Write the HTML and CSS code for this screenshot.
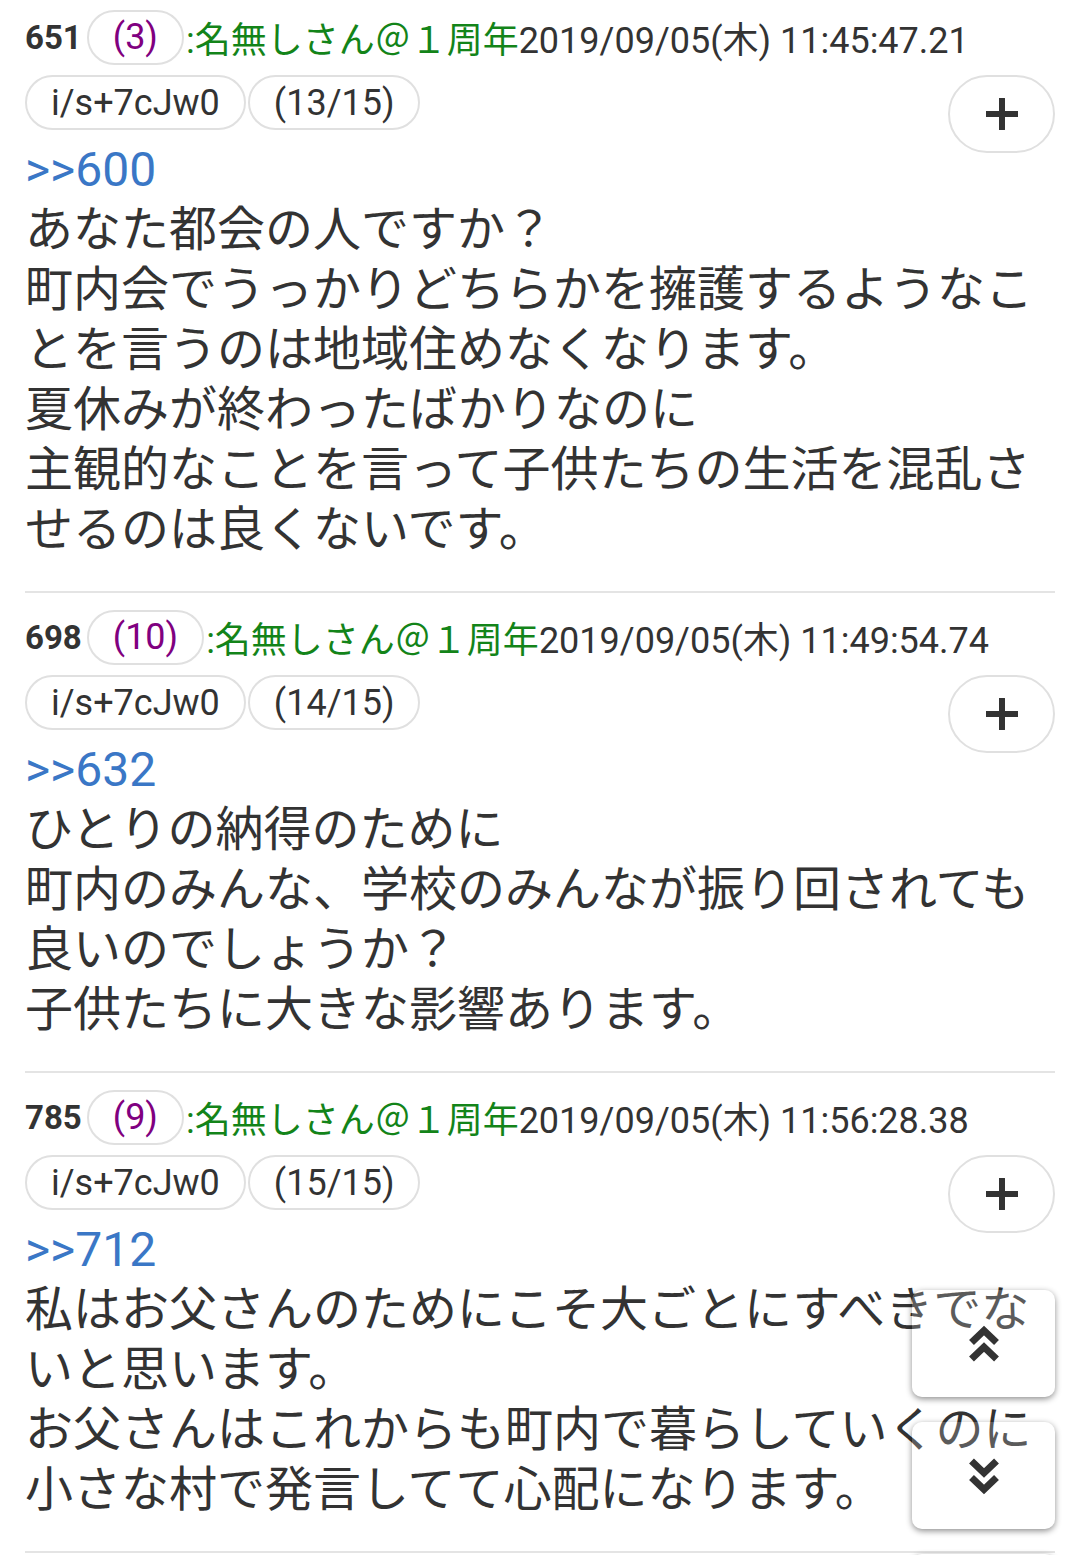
FILE: index.html
```html
<!DOCTYPE html>
<html lang="ja">
<head>
    <meta charset="UTF-8">
    <meta name="viewport" content="width=device-width, initial-scale=1.0">
    <title>スレッド</title>
    <link rel="stylesheet" href="styles.css">
</head>
<body>
    <div class="thread">
        <div class="post">
            <div class="head">
                <span class="num">651</span>
                <span class="pill refs">(3)</span>
                <span class="name">:名無しさん＠１周年</span>
                <span class="date">2019/09/05(木) 11:45:47.21</span>
            </div>
            <div class="tags">
                <span class="pill">i/s+7cJw0</span>
                <span class="pill">(13/15)</span>
                <button class="plus"><svg width="32" height="32" viewBox="0 0 32 32"><path d="M16 1v30M1 16h30" stroke="#333" stroke-width="6" stroke-linecap="round"/></svg></button>
            </div>
            <div class="body">
                <span class="anchor">&gt;&gt;600</span><br>
                あなた都会の人ですか？<br>
                町内会でうっかりどちらかを擁護するようなことを言うのは地域住めなくなります。<br>
                夏休みが終わったばかりなのに<br>
                主観的なことを言って子供たちの生活を混乱させるのは良くないです。
            </div>
        </div>

        <div class="post">
            <div class="head">
                <span class="num">698</span>
                <span class="pill refs">(10)</span>
                <span class="name">:名無しさん＠１周年</span>
                <span class="date">2019/09/05(木) 11:49:54.74</span>
            </div>
            <div class="tags">
                <span class="pill">i/s+7cJw0</span>
                <span class="pill">(14/15)</span>
                <button class="plus"><svg width="32" height="32" viewBox="0 0 32 32"><path d="M16 1v30M1 16h30" stroke="#333" stroke-width="6" stroke-linecap="round"/></svg></button>
            </div>
            <div class="body">
                <span class="anchor">&gt;&gt;632</span><br>
                ひとりの納得のために<br>
                町内のみんな、学校のみんなが振り回されても良いのでしょうか？<br>
                子供たちに大きな影響あります。
            </div>
        </div>

        <div class="post">
            <div class="head">
                <span class="num">785</span>
                <span class="pill refs">(9)</span>
                <span class="name">:名無しさん＠１周年</span>
                <span class="date">2019/09/05(木) 11:56:28.38</span>
            </div>
            <div class="tags">
                <span class="pill">i/s+7cJw0</span>
                <span class="pill">(15/15)</span>
                <button class="plus"><svg width="32" height="32" viewBox="0 0 32 32"><path d="M16 1v30M1 16h30" stroke="#333" stroke-width="6" stroke-linecap="round"/></svg></button>
            </div>
            <div class="body">
                <span class="anchor">&gt;&gt;712</span><br>
                私はお父さんのためにこそ大ごとにすべきでないと思います。<br>
                お父さんはこれからも町内で暮らしていくのに小さな村で発言してて心配になります。
            </div>
        </div>
    </div>

    <!-- scroll buttons -->
    <div class="scroller">
        <button class="jump"><svg width="30" height="38" viewBox="0 0 30 38"><path d="M2.5 17.5L15 5.5L27.5 17.5M2.5 34L15 22L27.5 34" fill="none" stroke="#333" stroke-width="7"/></svg></button>
        <button class="jump"><svg width="30" height="38" viewBox="0 0 30 38"><path d="M2.5 4L15 16L27.5 4M2.5 20.5L15 32.5L27.5 20.5" fill="none" stroke="#333" stroke-width="7"/></svg></button>
        <button class="jump"></button>
    </div>
</body>
</html>
```

FILE: styles.css
```css
body {
    margin: 0;
    font-family: Roboto, "Noto Sans CJK JP", sans-serif;
    color: #333;
    background-color: #fff;
}

.thread {
    padding: 0 25px;
}

.post {
    padding: 16px 0 31px;
    border-bottom: 2px solid #e4e4e4;
}

.post:first-child {
    padding-top: 9px;
}

.head {
    display: flex;
    align-items: center;
    height: 56px;
    font-size: 36px;
    white-space: nowrap;
}

.num {
    font-weight: bold;
    font-size: 33px;
    margin-right: 5px;
}

.pill {
    display: flex;
    align-items: center;
    box-sizing: border-box;
    height: 55px;
    padding: 0 24px;
    border: 2px solid #e0e0e0;
    border-radius: 28px;
    background-color: #fff;
}

.refs {
    color: #800080;
}

.name {
    color: #138419;
    margin-left: 2px;
}

.date {
    color: #333;
}

.tags {
    display: flex;
    align-items: flex-start;
    gap: 2px;
    height: 56px;
    margin-top: 10px;
    font-size: 36px;
}

.plus {
    margin-left: auto;
    width: 107px;
    height: 78px;
    padding: 0;
    border: 2px solid #e0e0e0;
    border-radius: 39px;
    background-color: #fff;
    display: flex;
    align-items: center;
    justify-content: center;
}

.body {
    margin-top: 9px;
    font-size: 48px;
    line-height: 60px;
}

.anchor {
    color: #3a77c6;
}

/* floating scroll buttons, see-through so the text shows */
.scroller {
    position: fixed;
    top: 1290px;
    right: 25px;
    display: flex;
    flex-direction: column;
    gap: 25px;
}

.jump {
    width: 143px;
    height: 107px;
    padding: 0;
    border: none;
    border-radius: 10px;
    background-color: rgba(255, 255, 255, 0.2);
    box-shadow: 0 2px 6px rgba(0, 0, 0, 0.45);
    display: flex;
    align-items: center;
    justify-content: center;
}
```
